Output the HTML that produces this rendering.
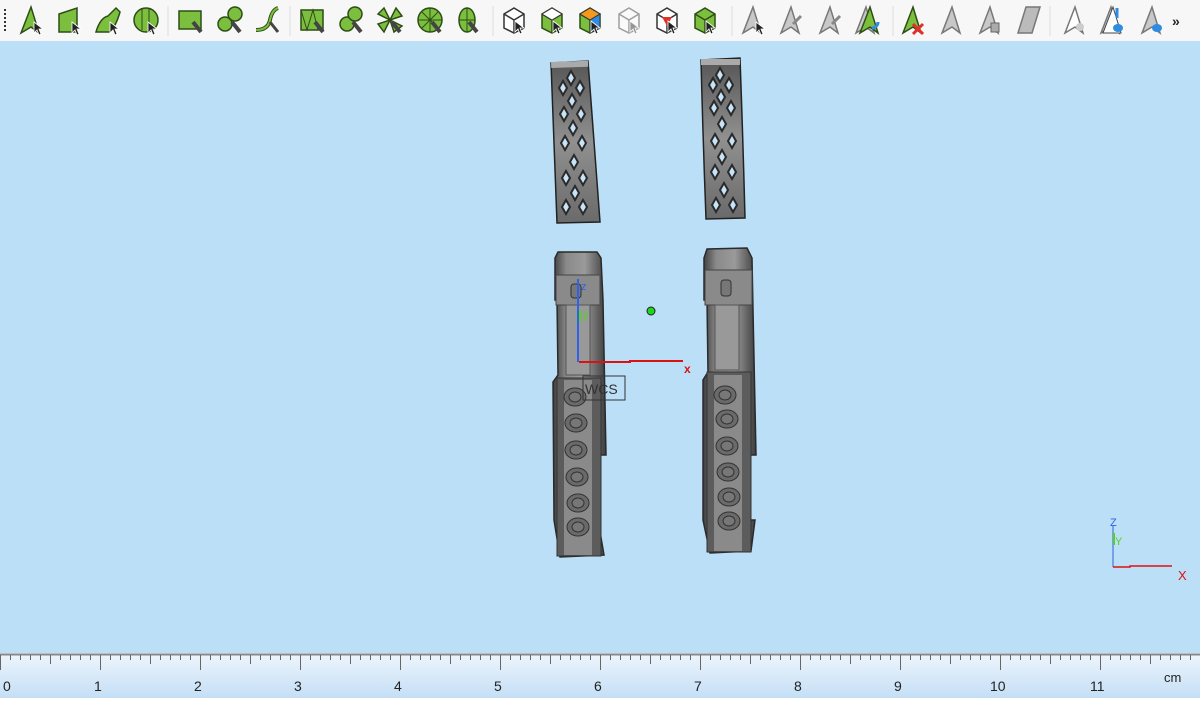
<!DOCTYPE html>
<html><head><meta charset="utf-8"><style>
html,body{margin:0;padding:0;width:1200px;height:698px;overflow:hidden;font-family:"Liberation Sans",sans-serif}
#tb{position:absolute;left:0;top:0;width:1200px;height:41px;background:#f7f7f7}
#vp{position:absolute;left:0;top:41px;width:1200px;height:612px;background:#bcdff8}
#rl{position:absolute;left:0;top:653px;width:1200px;height:45px;background:linear-gradient(#eef5fc,#c4dff6)}
</style></head><body>
<div id="tb"><svg width="1200" height="41">
<defs>
<g id="cur"><path d="M0 0 L0 11 L3 8 L5 13 L7 12 L5 7 L9 7Z" fill="#222" stroke="#fff" stroke-width=".8"/></g>
<g id="a"><path d="M-10 13 L0 -13 L8 13 L0 7Z" fill="#7cbf3f" stroke="#2d4d16" stroke-width="1.5"/></g>
<g id="ga"><path d="M-10 13 L0 -13 L8 13 L0 7Z" fill="#c8c8c8" stroke="#777" stroke-width="1.5"/></g>
<g id="cube"><path d="M-10 -6 L0 -12 L10 -6 L10 8 L0 13 L-10 8Z" fill="#fff" stroke="#333" stroke-width="1.5"/><path d="M-10 -6 L0 0 L10 -6 M0 0 L0 13" stroke="#333" stroke-width="1.5" fill="none"/></g>
<g id="gcube"><path d="M-10 -6 L0 -12 L10 -6 L10 8 L0 13 L-10 8Z" fill="#7cbf3f" stroke="#2d4d16" stroke-width="1.5"/><path d="M-10 -6 L0 0 L10 -6 M0 0 L0 13" stroke="#2d4d16" stroke-width="1.5" fill="none"/></g>
</defs>
<path d="M5 9 V33" stroke="#333" stroke-width="2" stroke-dasharray="2 2"/>
<g transform="translate(31,20)"><use href="#a"/><use href="#cur" x="3" y="2"/></g>
<g transform="translate(69,20)"><path d="M-10 -6 L8 -12 L8 12 L-10 12Z" fill="#7cbf3f" stroke="#2d4d16" stroke-width="1.5"/><use href="#cur" x="3" y="2"/></g>
<g transform="translate(108,20)"><path d="M-12 12 Q-8 -2 0 -4 Q4 -8 8 -12 L12 -8 Q8 6 2 12Z" fill="#7cbf3f" stroke="#2d4d16" stroke-width="1.5"/><use href="#cur" x="2" y="2"/></g>
<g transform="translate(146,20)"><circle r="12" fill="#7cbf3f" stroke="#2d4d16" stroke-width="1.5"/><path d="M-4 -11 V10 M3 -11 V10" stroke="#2d4d16"/><use href="#cur" x="2" y="2"/></g>
<path d="M168 6V36M290 6V36M493 6V36M732 6V36M893 6V36M1050 6V36" stroke="#ddd"/>
<g transform="translate(191,20)"><rect x="-12" y="-9" width="22" height="18" fill="#7cbf3f" stroke="#2d4d16" stroke-width="1.5"/><path d="M2 2 L10 12" stroke="#444" stroke-width="4"/></g>
<g transform="translate(230,20)"><circle cx="-5" cy="4" r="7" fill="#7cbf3f" stroke="#2d4d16" stroke-width="1.5"/><circle cx="5" cy="-6" r="7" fill="#7cbf3f" stroke="#2d4d16" stroke-width="1.5"/><path d="M2 2 L10 12" stroke="#444" stroke-width="4"/></g>
<g transform="translate(268,20)"><path d="M-12 10 Q0 10 2 0 Q4 -10 10 -12" stroke="#2d4d16" stroke-width="4" fill="none"/><path d="M-12 10 Q0 10 2 0 Q4 -10 10 -12" stroke="#7cbf3f" stroke-width="2" fill="none"/><path d="M2 2 L10 12" stroke="#444" stroke-width="3"/></g>
<g transform="translate(313,20)"><rect x="-12" y="-10" width="22" height="20" fill="#7cbf3f" stroke="#2d4d16" stroke-width="1.5"/><path d="M-12 -10 L-6 10 L0 -10 L5 10" stroke="#2d4d16" fill="none"/><path d="M2 2 L10 12" stroke="#444" stroke-width="4"/></g>
<g transform="translate(351,20)"><circle cx="-4" cy="4" r="7" fill="#7cbf3f" stroke="#2d4d16" stroke-width="1.5"/><circle cx="4" cy="-6" r="7" fill="#7cbf3f" stroke="#2d4d16" stroke-width="1.5"/><path d="M2 2 L10 12" stroke="#444" stroke-width="4"/></g>
<g transform="translate(390,20)"><path d="M0 0 L-12 -6 L-6 -12Z M0 0 L6 -12 L12 -4Z M0 0 L12 6 L4 12Z M0 0 L-6 12 L-12 4Z" fill="#7cbf3f" stroke="#2d4d16" stroke-width="1.5"/><path d="M2 2 L10 12" stroke="#444" stroke-width="4"/></g>
<g transform="translate(430,20)"><circle r="12" fill="#7cbf3f" stroke="#2d4d16" stroke-width="1.5"/><path d="M-12 0H12M0 -12V12M-8 -8L8 8M8 -8L-8 8" stroke="#2d4d16"/><path d="M2 2 L10 12" stroke="#444" stroke-width="4"/></g>
<g transform="translate(467,20)"><ellipse rx="8" ry="12" fill="#7cbf3f" stroke="#2d4d16" stroke-width="1.5"/><path d="M-8 0H8M0 -12V12" stroke="#2d4d16"/><path d="M2 2 L10 12" stroke="#444" stroke-width="4"/></g>
<g transform="translate(514,20)"><use href="#cube"/><use href="#cur" x="1" y="1"/></g>
<g transform="translate(552,20)"><use href="#gcube"/><path d="M-10 -6 L0 -12 L10 -6 L0 0Z" fill="#fff" stroke="#333"/><use href="#cur" x="1" y="1"/></g>
<g transform="translate(590,20)"><use href="#gcube"/><path d="M-10 -6 L0 -12 L10 -6 L0 0Z" fill="#f39a1e" stroke="#333"/><path d="M0 0 L10 -6 L10 8 L0 13Z" fill="#2f8ce0" stroke="#333"/><use href="#cur" x="1" y="1"/></g>
<g transform="translate(629,20)" opacity=".45"><use href="#cube"/><use href="#cur" x="1" y="1"/></g>
<g transform="translate(667,20)"><use href="#cube"/><path d="M-5 -3 L5 -3 L0 6Z" fill="#e0302a"/><use href="#cur" x="1" y="1"/></g>
<g transform="translate(705,20)"><use href="#gcube"/><use href="#cur" x="1" y="1"/></g>
<g transform="translate(753,20)"><use href="#ga"/><use href="#cur" x="3" y="2"/></g>
<g transform="translate(791,20)"><use href="#ga"/><path d="M2 4 L10 -4" stroke="#888" stroke-width="3"/></g>
<g transform="translate(830,20)"><use href="#ga"/><path d="M2 4 L10 -4" stroke="#888" stroke-width="3"/></g>
<g transform="translate(868,20)"><use href="#ga" x="-2"/><use href="#a" x="2"/><path d="M4 8 A6 6 0 0 0 10 2" stroke="#2f8ce0" stroke-width="3" fill="none"/></g>
<g transform="translate(913,20)"><use href="#a"/><path d="M0 4 L10 14 M10 4 L0 14" stroke="#e0302a" stroke-width="3"/></g>
<g transform="translate(952,20)"><use href="#ga"/></g>
<g transform="translate(990,20)"><use href="#ga"/><rect x="1" y="3" width="8" height="9" fill="#aaa" stroke="#666"/></g>
<g transform="translate(1028,20)"><path d="M-10 13 L-2 -13 L12 -13 L4 13Z" fill="#bbb" stroke="#777" stroke-width="1.5"/></g>
<g transform="translate(1075,20)"><path d="M-10 13 L0 -13 L8 13 L0 7Z" fill="#fff" stroke="#777" stroke-width="1.5"/><circle cx="5" cy="7" r="4" fill="#ccc"/></g>
<g transform="translate(1113,20)"><use href="#ga" x="-2"/><path d="M-10 13 L0 -13 L8 13Z" fill="#fff" stroke="#444"/><path d="M4 -12 V-2" stroke="#2f8ce0" stroke-width="3"/><ellipse cx="5" cy="8" rx="5" ry="4" fill="#2f8ce0"/></g>
<g transform="translate(1152,20)"><use href="#ga"/><ellipse cx="5" cy="8" rx="5" ry="4" fill="#2f8ce0"/></g>
<text x="1172" y="26" font-size="14" font-weight="bold" fill="#222">»</text>
</svg></div>

<div id="vp"><svg width="1200" height="612">
<defs>
<linearGradient id="gs" x1="0" x2="1"><stop offset="0" stop-color="#3d3d3d"/><stop offset=".25" stop-color="#8a8a8a"/><stop offset=".6" stop-color="#9a9a9a"/><stop offset="1" stop-color="#3d3d3d"/></linearGradient>
<linearGradient id="gv" x1="0" y1="0" x2="0" y2="1"><stop offset="0" stop-color="#555"/><stop offset=".5" stop-color="#909090"/><stop offset="1" stop-color="#6a6a6a"/></linearGradient>
<g id="dm"><path d="M0 -7 L4 0 L0 7 L-4 0Z" fill="#c8e4f8" stroke="#2a2a2a" stroke-width="2"/></g>
<g id="ring"><ellipse rx="11" ry="9" fill="#6a6a6a" stroke="#333"/><ellipse rx="6" ry="5" fill="#777" stroke="#333"/></g>
</defs>
<g transform="translate(0,-41)">
<path d="M551 63 L588 61 Q594 140 600 222 L557 223 Q554 140 551 63Z" fill="url(#gv)" stroke="#222" stroke-width="1.5"/>
<rect x="551" y="62" width="37" height="6" fill="#aaa" transform="rotate(-2 551 62)"/>
<g><use href="#dm" x="571" y="78"/><use href="#dm" x="563" y="88"/><use href="#dm" x="580" y="88"/><use href="#dm" x="572" y="101"/><use href="#dm" x="564" y="114"/><use href="#dm" x="581" y="114"/><use href="#dm" x="573" y="128"/><use href="#dm" x="565" y="143"/><use href="#dm" x="582" y="143"/><use href="#dm" x="574" y="162"/><use href="#dm" x="566" y="178"/><use href="#dm" x="583" y="178"/><use href="#dm" x="575" y="193"/><use href="#dm" x="566" y="207"/><use href="#dm" x="583" y="207"/></g>
<path d="M701 60 L740 58 Q743 140 745 218 L706 219 Q703 140 701 60Z" fill="url(#gv)" stroke="#222" stroke-width="1.5"/>
<rect x="701" y="59" width="39" height="6" fill="#aaa"/>
<g><use href="#dm" x="720" y="75"/><use href="#dm" x="713" y="85"/><use href="#dm" x="729" y="85"/><use href="#dm" x="721" y="97"/><use href="#dm" x="714" y="108"/><use href="#dm" x="731" y="108"/><use href="#dm" x="722" y="124"/><use href="#dm" x="715" y="141"/><use href="#dm" x="732" y="141"/><use href="#dm" x="722" y="157"/><use href="#dm" x="715" y="172"/><use href="#dm" x="732" y="172"/><use href="#dm" x="724" y="190"/><use href="#dm" x="716" y="205"/><use href="#dm" x="733" y="205"/></g>

<path d="M555 258 L558 252 L597 252 L601 258 L603 300 L606 455 L600 455 L598 520 L604 555 L560 557 L554 520 L553 382 L558 375 L557 300 L555 300Z" fill="url(#gs)" stroke="#2a2a2a" stroke-width="1.5"/>
<rect x="556" y="275" width="44" height="30" fill="#8a8a8a" stroke="#444"/>
<rect x="571" y="284" width="10" height="14" rx="3" fill="#777" stroke="#333"/>
<rect x="566" y="305" width="24" height="70" fill="#999" stroke="#555"/>
<rect x="557" y="378" width="44" height="178" fill="#5c5c5c" stroke="#333"/>
<rect x="564" y="380" width="28" height="175" fill="#8a8a8a"/>
<use href="#ring" x="575" y="397"/><use href="#ring" x="576" y="423"/><use href="#ring" x="576" y="450"/><use href="#ring" x="577" y="477"/><use href="#ring" x="578" y="503"/><use href="#ring" x="578" y="527"/>
<path d="M704 258 L707 249 L747 248 L752 258 L753 310 L756 455 L750 455 L749 520 L755 520 L751 551 L710 553 L703 520 L703 380 L708 372 L707 300 L704 300Z" fill="url(#gs)" stroke="#2a2a2a" stroke-width="1.5"/>
<rect x="705" y="270" width="47" height="35" fill="#8a8a8a" stroke="#444"/>
<rect x="721" y="280" width="10" height="16" rx="3" fill="#777" stroke="#333"/>
<rect x="715" y="305" width="24" height="65" fill="#999" stroke="#555"/>
<rect x="707" y="372" width="44" height="180" fill="#5c5c5c" stroke="#333"/>
<rect x="714" y="375" width="28" height="176" fill="#8a8a8a"/>
<use href="#ring" x="725" y="395"/><use href="#ring" x="727" y="419"/><use href="#ring" x="727" y="446"/><use href="#ring" x="728" y="472"/><use href="#ring" x="729" y="497"/><use href="#ring" x="729" y="521"/>

<path d="M578 362 V279" stroke="#2e62e8" stroke-width="2"/>
<path d="M580 310 V322" stroke="#56d31e" stroke-width="2"/>
<text x="581" y="290" font-size="11" fill="#2e62e8">z</text>
<text x="583" y="318" font-size="11" fill="#56d31e">y</text>
<path d="M579 362 H630 V361 H683" stroke="#dd1111" stroke-width="2" fill="none"/>
<text x="684" y="373" font-size="12" font-weight="bold" fill="#dd1111">x</text>
<rect x="583" y="376" width="42" height="24" fill="none" stroke="#333"/>
<text x="585" y="394" font-size="14" fill="#333">WCS</text>
<circle cx="651" cy="311" r="4" fill="#1fd61f" stroke="#222"/>
<path d="M1113 567 V526" stroke="#2e62e8"/><path d="M1114 545 V533" stroke="#56d31e" stroke-width="2"/>
<path d="M1113 567 H1130 V566 H1172" stroke="#dd1111" stroke-width="1.5" fill="none"/>
<text x="1110" y="526" font-size="11" fill="#2e62e8">Z</text>
<text x="1115" y="545" font-size="11" fill="#56d31e">Y</text>
<text x="1178" y="580" font-size="13" fill="#dd1111">X</text>
</g>
</svg></div>

<div id="rl"><svg width="1200" height="45">
<defs><pattern id="tk" width="10" height="45" patternUnits="userSpaceOnUse"><path d="M0.5 2V7" stroke="#666"/></pattern>
<pattern id="tk5" width="100" height="45" patternUnits="userSpaceOnUse"><path d="M0.5 2V17M50.5 2V11" stroke="#666"/></pattern></defs>
<path d="M0 1.5H1200" stroke="#888" stroke-width="2"/>
<rect width="1200" height="45" fill="url(#tk)"/>
<rect width="1200" height="45" fill="url(#tk5)"/>
<g font-size="14" fill="#222">
<text x="3" y="38">0</text><text x="94" y="38">1</text><text x="194" y="38">2</text><text x="294" y="38">3</text><text x="394" y="38">4</text><text x="494" y="38">5</text><text x="594" y="38">6</text><text x="694" y="38">7</text><text x="794" y="38">8</text><text x="894" y="38">9</text><text x="990" y="38">10</text><text x="1090" y="38">11</text><text x="1164" y="29" font-size="13">cm</text>
</g></svg></div>
</body></html>
